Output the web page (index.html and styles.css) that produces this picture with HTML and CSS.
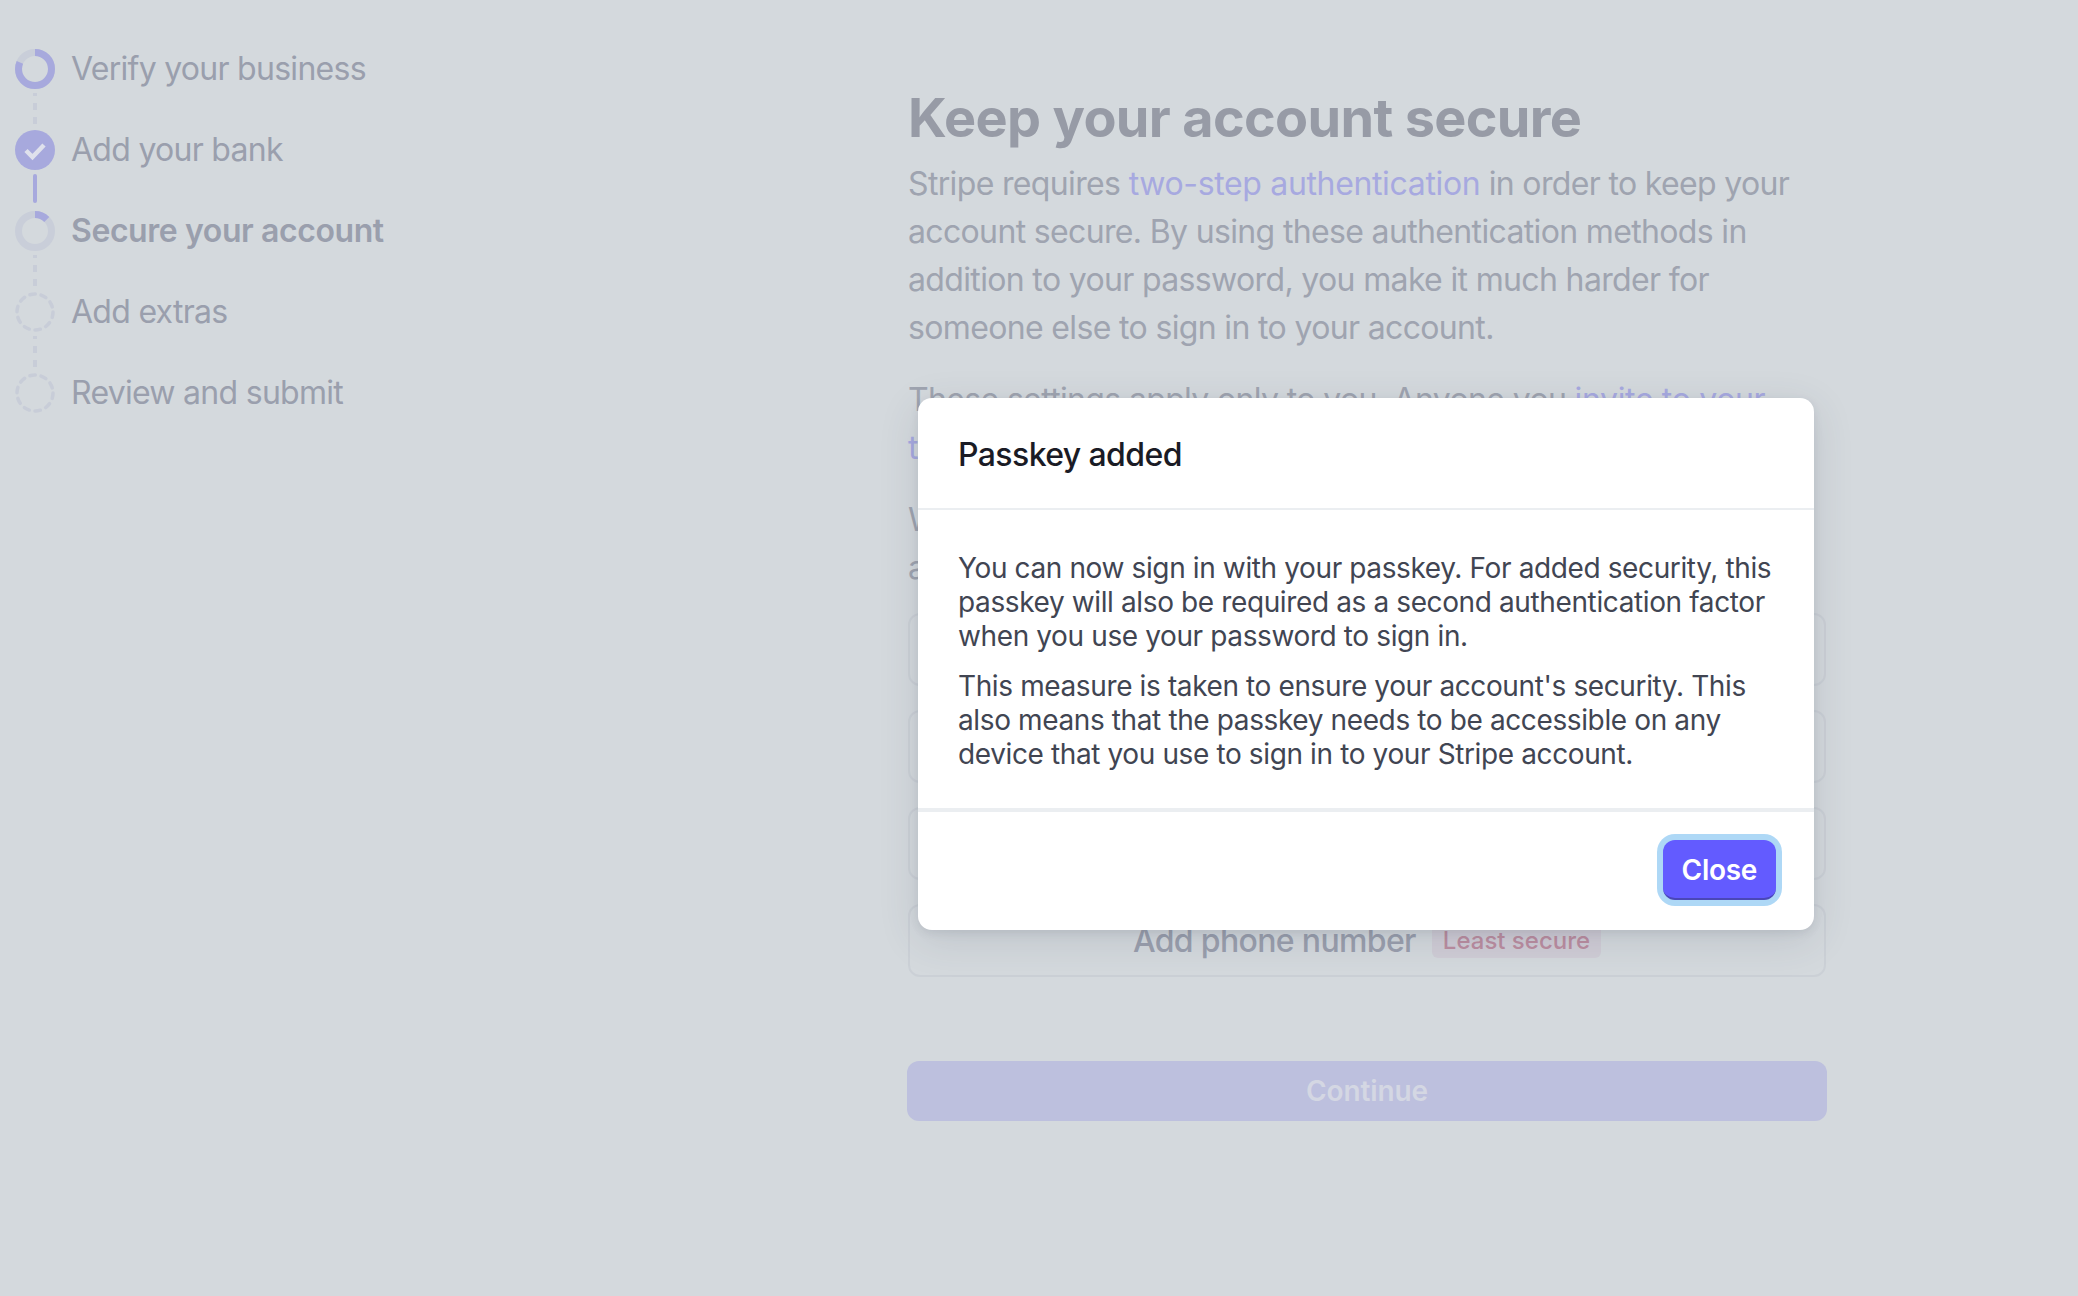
FILE: index.html
```html
<!DOCTYPE html>
<html lang="en">
<head>
    <meta charset="UTF-8">
    <title>Keep your account secure</title>
    <link rel="stylesheet" href="styles.css">
</head>
<body>

<div class="page">
    <nav class="steps">
        <div class="step">
            <svg class="step-icon" viewBox="0 0 40 40"><circle class="ring-track" cx="20" cy="20" r="16.5"/><circle class="ring-active" cx="20" cy="20" r="16.5" stroke-dasharray="84 104" transform="rotate(-90 20 20)"/></svg>
            <span>Verify your business</span>
        </div>
        <div class="link link-dashed"></div>
        <div class="step">
            <svg class="step-icon" viewBox="0 0 40 40"><circle class="disc" cx="20" cy="20" r="20"/><path class="tick" d="M11 20.5l6.5 6.5L29 15"/></svg>
            <span>Add your bank</span>
        </div>
        <div class="link link-solid"></div>
        <div class="step step-current">
            <svg class="step-icon" viewBox="0 0 40 40"><circle class="ring-track" cx="20" cy="20" r="16.5"/><circle class="ring-active" cx="20" cy="20" r="16.5" stroke-dasharray="13 104" transform="rotate(-90 20 20)"/></svg>
            <span>Secure your account</span>
        </div>
        <div class="link link-dashed"></div>
        <div class="step">
            <svg class="step-icon" viewBox="0 0 40 40"><circle class="ring-dashed" cx="20" cy="20" r="18"/></svg>
            <span>Add extras</span>
        </div>
        <div class="link link-dashed"></div>
        <div class="step">
            <svg class="step-icon" viewBox="0 0 40 40"><circle class="ring-dashed" cx="20" cy="20" r="18"/></svg>
            <span>Review and submit</span>
        </div>
    </nav>

    <main class="content">
        <h1>Keep your account secure</h1>
        <p>Stripe requires <a href="#">two-step authentication</a> in order to keep your account secure. By using these authentication methods in addition to your password, you make it much harder for someone else to sign in to your account.</p>
        <p>These settings apply only to you. Anyone you <a href="#">invite to your team</a> will set up their own.</p>
        <p>We recommend that you set up two or more of the methods and always keep a backup.</p>
        <div class="methods">
            <div class="method">Add passkey</div>
            <div class="method">Add authenticator app</div>
            <div class="method">Add security key</div>
            <div class="method">Add phone number <span class="tag">Least secure</span></div>
        </div>
        <button class="continue">Continue</button>
    </main>
</div>

<div class="modal">
    <div class="modal-head">Passkey added</div>
    <div class="modal-body">
        <p>You can now sign in with your passkey. For added security, this passkey will also be required as a second authentication factor when you use your password to sign in.</p>
        <p>This measure is taken to ensure your account's security. This also means that the passkey needs to be accessible on any device that you use to sign in to your Stripe account.</p>
    </div>
    <div class="modal-foot">
        <button class="close">Close</button>
    </div>
</div>

</body>
</html>
```

FILE: styles.css
```css
html, body {
    height: 100%;
}
body {
    font-family: Inter, 'Noto Sans', sans-serif;
    background-color: #d4d9dd;
    color: #9a9fad;
    margin: 0;
    padding: 0;
    overflow: hidden;
}
.page {
    display: flex;
    padding-top: 49px;
}

/* left column */
.steps {
    width: 908px;
    padding-left: 15px;
    box-sizing: border-box;
    flex-shrink: 0;
}
.step {
    display: flex;
    align-items: center;
    gap: 16px;
    height: 40px;
    font-size: 32px;
    letter-spacing: -0.72px;
    white-space: nowrap;
}
.step span {
    margin-top: -2px;
}
.step-current {
    font-weight: 600;
    letter-spacing: -0.42px;
}
.step-icon {
    width: 40px;
    height: 40px;
    flex-shrink: 0;
}
.ring-track, .ring-active {
    fill: none;
    stroke-width: 7;
}
.ring-track {
    stroke: #c9ced9;
}
.ring-active {
    stroke: #a7a9dd;
}
.ring-dashed {
    fill: none;
    stroke: #c8cdd8;
    stroke-width: 3.5;
    stroke-dasharray: 5.5 5.8;
    stroke-linecap: round;
}
.disc {
    fill: #a7a9dd;
}
.tick {
    fill: none;
    stroke: #dfe1ec;
    stroke-width: 4.5;
}
.link {
    width: 4px;
    height: 41px;
    margin-left: 18px;
    box-sizing: border-box;
}
.link-solid {
    background: #a7a9dd;
    border-radius: 2px;
    margin-top: 4px;
    height: 29px;
    margin-bottom: 8px;
}
.link-dashed {
    background: repeating-linear-gradient(#c8cdd8 0 7px, transparent 7px 14px);
    background-clip: content-box;
    padding: 4px 0 4px;
    height: 41px;
}

/* main column */
.content {
    width: 918px;
    font-size: 32px;
    line-height: 48px;
    letter-spacing: -0.65px;
}
h1 {
    font-size: 54px;
    line-height: 64px;
    font-weight: 700;
    letter-spacing: -0.67px;
    margin: 37px 0 10px;
    color: #979ba6;
}
.content p {
    margin: 0 0 24px;
    color: #9fa4b0;
}
.content a {
    color: #a7a9e0;
    text-decoration: none;
    letter-spacing: -0.35px;
}
.methods {
    display: flex;
    flex-direction: column;
    gap: 24px;
    margin-top: -3px;
}
.method {
    height: 73px;
    border: 2px solid #cbd0d6;
    border-radius: 12px;
    box-sizing: border-box;
    display: flex;
    align-items: center;
    justify-content: center;
    gap: 16px;
    font-weight: 500;
}
.tag {
    font-size: 24px;
    line-height: 34px;
    padding: 0 11px;
    border-radius: 6px;
    background: #d0cdd6;
    color: #bb8da0;
    letter-spacing: 0;
}
.continue {
    display: block;
    width: 920px;
    height: 60px;
    margin: 84px 0 0 -1px;
    border: 0;
    border-radius: 12px;
    background: #bdc0de;
    color: #d4d7e3;
    font-family: inherit;
    font-size: 28px;
    font-weight: 600;
    letter-spacing: -0.1px;
}

/* dialog sits on top of everything */
.modal {
    position: absolute;
    left: 918px;
    top: 398px;
    width: 896px;
    background: white;
    border-radius: 14px;
    box-shadow: 0 10px 40px rgba(60,66,87,0.14), 0 3px 8px rgba(60,66,87,0.1);
}
.modal-head {
    height: 112px;
    box-sizing: border-box;
    padding: 2px 40px 0;
    display: flex;
    align-items: center;
    font-size: 32px;
    font-weight: 500;
    letter-spacing: -0.6px;
    color: #1a1b25;
    border-bottom: 2px solid #ebeef1;
}
.modal-body {
    padding: 41px 30px 37px 40px;
    font-size: 28px;
    line-height: 34px;
    letter-spacing: -0.38px;
    color: #414552;
}
.modal-body p {
    margin: 0 0 16px;
}
.modal-body p:last-child {
    margin-bottom: 0;
}
.modal-foot {
    display: flex;
    justify-content: flex-end;
    padding: 28px 38px 30px;
    border-top: 4px solid #ebeef1;
}
.close {
    height: 60px;
    padding: 2px 19px 0;
    border: 0;
    border-bottom: 2px solid #4a47b8;
    border-radius: 12px;
    background: #635bff;
    color: white;
    font-family: inherit;
    font-size: 28px;
    font-weight: 600;
    letter-spacing: -0.3px;
    box-shadow: 0 0 0 6px #aed8f6;
}
```
